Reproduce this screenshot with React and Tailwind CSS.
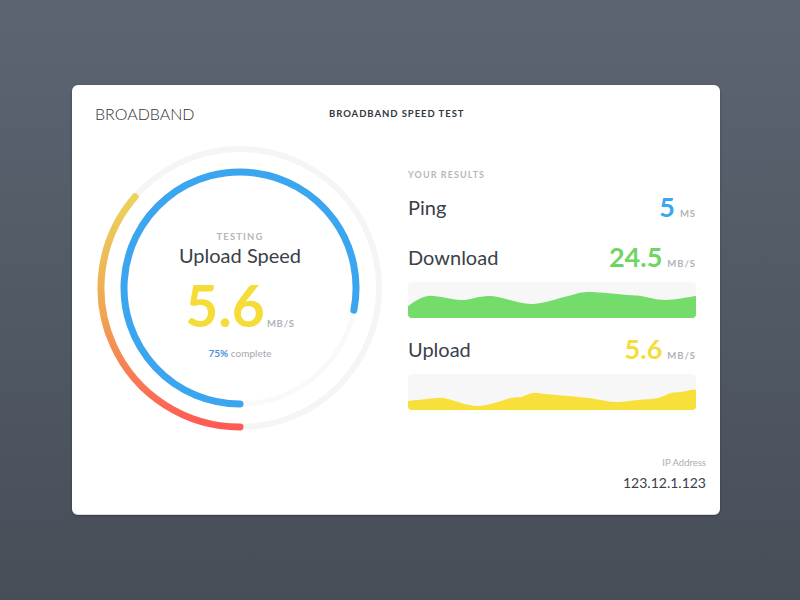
const downloadPts = [
  [0, 24], [20, 14], [53, 18], [83, 14], [123, 22], [160, 14], [180, 10],
  [220, 13], [233, 14], [257, 18], [288, 14],
];

const uploadPts = [
  [0, 27], [30, 24], [40, 25], [70, 32], [103, 24], [113, 23], [125, 19],
  [137, 20], [180, 24], [207, 28], [230, 26], [250, 24], [263, 19],
  [273, 18], [283, 16], [288, 16],
];

// catmull-rom -> bezier, closed at the bottom
function areaPath(pts, w, h) {
  let d = `M0 ${h} L${pts[0][0]} ${pts[0][1]}`;
  for (let i = 0; i < pts.length - 1; i++) {
    const p0 = pts[i - 1] || pts[i];
    const p1 = pts[i];
    const p2 = pts[i + 1];
    const p3 = pts[i + 2] || p2;
    const c1x = p1[0] + (p2[0] - p0[0]) / 6;
    const c1y = p1[1] + (p2[1] - p0[1]) / 6;
    const c2x = p2[0] - (p3[0] - p1[0]) / 6;
    const c2y = p2[1] - (p3[1] - p1[1]) / 6;
    d += ` C${c1x} ${c1y} ${c2x} ${c2y} ${p2[0]} ${p2[1]}`;
  }
  return d + ` L${w} ${h} Z`;
}

function Chart({ pts, color }) {
  return (
    <div className="h-[36px] rounded-[4px] bg-[#f7f7f7] overflow-hidden">
      <svg width="288" height="36" viewBox="0 0 288 36" className="block">
        <path d={areaPath(pts, 288, 36)} fill={color} />
      </svg>
    </div>
  );
}

function Gauge() {
  return (
    <div className="relative w-[300px] h-[300px] mt-[13px] shrink-0">
      <svg width="300" height="300" viewBox="0 0 300 300" className="absolute inset-0">
        <defs>
          <linearGradient id="warm" x1="0" y1="0" x2="0" y2="1">
            <stop offset="0%" stopColor="#e9d45c" />
            <stop offset="50%" stopColor="#f1a552" />
            <stop offset="100%" stopColor="#fe5a55" />
          </linearGradient>
        </defs>
        <circle cx="150" cy="150" r="139" fill="none" stroke="#f5f5f5" strokeWidth="6" />
        <circle cx="150" cy="150" r="116" fill="none" stroke="#f9f9f9" strokeWidth="5" />
        <path
          d="M45.1 58.8 A139 139 0 0 0 150 289"
          fill="none"
          stroke="url(#warm)"
          strokeWidth="7"
          strokeLinecap="round"
        />
        <path
          d="M150 266 A116 116 0 1 1 263.9 172.1"
          fill="none"
          stroke="#3ba6ef"
          strokeWidth="7"
          strokeLinecap="round"
        />
      </svg>
      <div className="relative flex flex-col items-center pt-[93px]">
        <div className="text-[9.5px] leading-[12px] font-bold tracking-[0.12em] text-[#b4b7bc]">
          TESTING
        </div>
        <div className="text-[20px] leading-[24px] text-[#3b4049]">Upload Speed</div>
        <div className="flex items-baseline mt-[10px]">
          <span className="text-[57px] leading-[56px] font-bold text-[#f6dc38]">5.6</span>
          <span className="ml-[2px] text-[9.5px] font-bold tracking-[0.08em] text-[#b0b3b8]">
            MB/S
          </span>
        </div>
        <div className="mt-[13px] text-[10px] leading-[14px] text-[#a3a7ad]">
          <span className="font-bold text-[#4a8fe0]">75%</span> complete
        </div>
      </div>
    </div>
  );
}

function ResultRow({ label, value, unit, color }) {
  return (
    <div className="flex items-center justify-between h-[32px]">
      <span className="text-[20px] text-[#3b4049]">{label}</span>
      <span className="flex items-baseline">
        <span className={"text-[27px] leading-[32px] font-bold " + color}>{value}</span>
        <span className="ml-[5px] text-[9.5px] font-bold tracking-[0.1em] text-[#afb3b9]">
          {unit}
        </span>
      </span>
    </div>
  );
}

export default function App() {
  return (
    <div className="min-h-[600px] bg-gradient-to-b from-[#5c6572] to-[#474e58] pt-[85px] pl-[72px] font-['Lato','Liberation_Sans',sans-serif]">
      <div className="w-[648px] h-[430px] bg-white rounded-[6px] shadow-[0_1px_3px_rgba(0,0,0,0.25)] border-b border-[#d8d8d8] pl-[18px] pt-[18px]">
        <div className="flex items-center h-[22px] pl-[5px]">
          <div className="w-[234px] text-[16px] font-light text-[#2f333a]">BROADBAND</div>
          <div className="text-[9.5px] font-bold tracking-[0.1em] text-[#33373e]">
            BROADBAND SPEED TEST
          </div>
        </div>
        <div className="flex">
          <Gauge />
          <div className="ml-[18px] w-[288px] pt-[44px]">
            <div className="text-[9px] leading-[12px] font-bold tracking-[0.12em] text-[#b4b7bc]">
              YOUR RESULTS
            </div>
            <div className="mt-[10px]">
              <ResultRow label="Ping" value="5" unit="MS" color="text-[#3ba6ef]" />
            </div>
            <div className="mt-[18px]">
              <ResultRow label="Download" value="24.5" unit="MB/S" color="text-[#6dd662]" />
            </div>
            <div className="mt-[9px]">
              <Chart pts={downloadPts} color="#74dc6a" />
            </div>
            <div className="mt-[15px]">
              <ResultRow label="Upload" value="5.6" unit="MB/S" color="text-[#f6dc38]" />
            </div>
            <div className="mt-[9px]">
              <Chart pts={uploadPts} color="#f7e03a" />
            </div>
            <div className="mt-[47px] -mr-[10px] flex flex-col items-end">
              <div className="text-[9.5px] leading-[12px] text-[#a9adb3]">IP Address</div>
              <div className="mt-[5px] text-[14px] leading-[18px] text-[#3b4049]">
                123.12.1.123
              </div>
            </div>
          </div>
        </div>
      </div>
    </div>
  );
}
